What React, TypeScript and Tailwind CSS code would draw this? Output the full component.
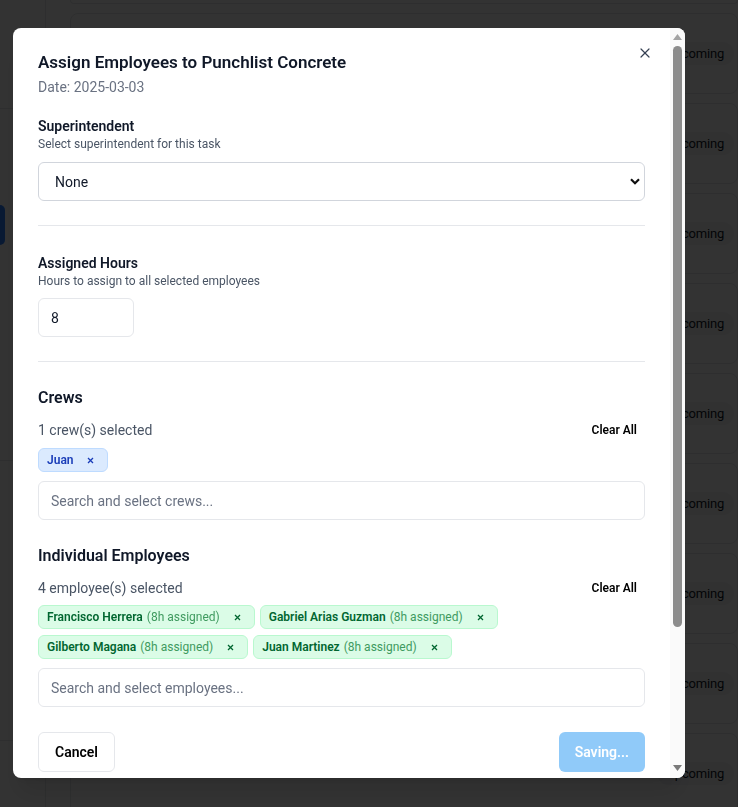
import { X } from "lucide-react";

const employees = [
  ["Francisco Herrera", "Gabriel Arias Guzman"],
  ["Gilberto Magana", "Juan Martinez"],
];

const Remove = ({ className }: { className: string }) => (
  <svg width="7" height="7" viewBox="0 0 7 7" className={className}>
    <path d="M1 1 L6 6 M6 1 L1 6" stroke="currentColor" strokeWidth="1.3" />
  </svg>
);

const Background = () => (
  <div className="flex h-screen w-full overflow-hidden bg-white">
    <aside className="flex w-[46px] shrink-0 flex-col border-r border-gray-200">
      <div className="h-[109px] border-b border-gray-200" />
      <div className="h-[352px] border-b border-gray-200 pt-[96px]">
        <div className="h-[40px] w-[5px] rounded-r-md bg-blue-500" />
      </div>
      <div className="h-[280px] border-b border-gray-200" />
    </aside>
    <main className="flex-1 pl-[24px]">
      <div className="flex flex-col gap-[9px]">
        <div className="h-[4px] rounded-b-lg border border-t-0 border-gray-200" />
        {Array.from({ length: 9 }).map((_, i) => (
          <div
            key={i}
            className="flex h-[81px] items-center justify-end rounded-lg border border-gray-200 pr-[3px]"
          >
            <span className="rounded-full bg-gray-100 px-2.5 py-0.5 text-[13px] tracking-[-0.2px] text-gray-900">
              Upcoming
            </span>
          </div>
        ))}
      </div>
    </main>
  </div>
);

export default function App() {
  return (
    <div className="relative font-[Roboto,sans-serif]">
      <Background />
      <div className="fixed inset-0 bg-black/80 pl-[13px] pt-[28px]">
        <div className="relative flex h-[750px] w-[672px] overflow-hidden rounded-lg bg-white shadow-xl">
          <button className="absolute right-[32px] top-[17px] flex h-4 w-4 items-center justify-center text-gray-700">
            <X size={16} strokeWidth={1.8} />
          </button>

          <div className="min-w-0 flex-1 px-[25px] pt-5">
            <h2 className="text-[17px] font-semibold leading-7 text-gray-900">
              Assign Employees to Punchlist Concrete
            </h2>
            <p className="mt-px text-sm text-gray-500">Date: 2025-03-03</p>

            <div className="mt-[19px]">
              <div className="text-sm font-semibold text-gray-900">Superintendent</div>
              <div className="text-xs leading-4 text-gray-600">
                Select superintendent for this task
              </div>
              <div className="mt-[10px] flex h-[39px] items-center justify-between rounded-md border border-gray-300 pl-4 pr-[4px] text-sm text-gray-900">
                <span>None</span>
                <svg width="10" height="7" viewBox="0 0 10 7">
                  <path d="M1 1.2 L5 5.2 L9 1.2" fill="none" stroke="#111" strokeWidth="2.2" />
                </svg>
              </div>
            </div>

            <hr className="mt-6 border-gray-200" />

            <div className="mt-[27px]">
              <div className="text-sm font-semibold text-gray-900">Assigned Hours</div>
              <div className="text-xs leading-4 text-gray-600">
                Hours to assign to all selected employees
              </div>
              <input
                readOnly
                value="8"
                className="mt-[9px] h-[39px] w-24 rounded-md border border-gray-200 pl-3 text-sm text-gray-900 outline-none"
              />
            </div>

            <hr className="mt-6 border-gray-200" />

            <div className="mt-6">
              <h3 className="text-base font-semibold text-gray-900">Crews</h3>
              <div className="mt-2.5 flex items-center justify-between">
                <span className="text-sm text-gray-600">1 crew(s) selected</span>
                <button className="px-2 text-xs font-semibold text-black">Clear All</button>
              </div>
              <div className="mt-2 flex flex-wrap gap-1.5">
                <span className="flex h-6 items-center rounded-md border border-blue-200 bg-blue-100 pl-2 pr-[13px] text-xs">
                  <span className="font-semibold text-blue-800">Juan</span>
                  <Remove className="ml-[13px] text-blue-800" />
                </span>
              </div>
              <input
                readOnly
                placeholder="Search and select crews..."
                className="mt-[9px] h-[39px] w-full rounded-md border border-gray-200 pl-3 text-sm outline-none placeholder:text-gray-500"
              />
            </div>

            <div className="mt-6">
              <h3 className="text-base font-semibold text-gray-900">Individual Employees</h3>
              <div className="mt-2.5 flex items-center justify-between">
                <span className="text-sm text-gray-600">4 employee(s) selected</span>
                <button className="px-2 text-xs font-semibold text-black">Clear All</button>
              </div>
              <div className="mt-[7px] flex flex-col gap-1.5">
                {employees.map((row, r) => (
                  <div key={r} className="flex gap-[5px]">
                    {row.map((name) => (
                      <span
                        key={name}
                        className="flex h-6 items-center rounded-md border border-green-200 bg-green-100 pl-2 pr-[13px] text-xs"
                      >
                        <span className="font-semibold text-green-800">{name}</span>
                        <span className="ml-1 text-[#3f9a5f]">(8h assigned)</span>
                        <Remove className="ml-[14px] text-green-800" />
                      </span>
                    ))}
                  </div>
                ))}
              </div>
              <input
                readOnly
                placeholder="Search and select employees..."
                className="mt-[9px] h-[39px] w-full rounded-md border border-gray-200 pl-3 text-sm outline-none placeholder:text-gray-500"
              />
            </div>

            <div className="mt-[25px] flex items-center justify-between pb-6">
              <button className="h-10 rounded-md border border-gray-200 px-4 text-sm font-semibold text-black">
                Cancel
              </button>
              <button className="h-10 rounded-md bg-[#90caf9] px-4 text-sm font-semibold text-white">
                Saving...
              </button>
            </div>
          </div>

          <div className="flex w-[15px] shrink-0 flex-col items-center bg-[#fafafa]">
            <svg width="9" height="6" viewBox="0 0 9 6" className="mt-[6px]">
              <path d="M4.5 0 L9 6 L0 6 Z" fill="#a3a3a3" />
            </svg>
            <div className="mt-[6px] h-[581px] w-[9px] rounded-full bg-[#8c8c8c]" />
            <div className="flex-1" />
            <svg width="9" height="6" viewBox="0 0 9 6" className="mb-[7px]">
              <path d="M0 0 L9 0 L4.5 6 Z" fill="#7a7a7a" />
            </svg>
          </div>
        </div>
      </div>
    </div>
  );
}
